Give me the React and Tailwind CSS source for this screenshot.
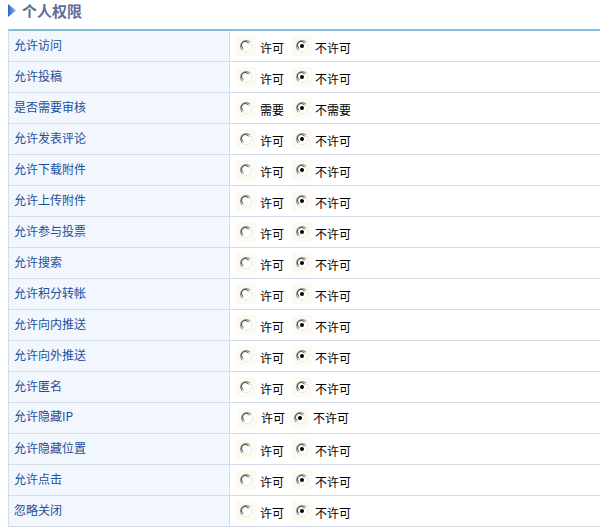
import React from "react"

const rows = [
  { label: "允许访问", yes: "许可", no: "不许可" },
  { label: "允许投稿", yes: "许可", no: "不许可" },
  { label: "是否需要审核", yes: "需要", no: "不需要" },
  { label: "允许发表评论", yes: "许可", no: "不许可" },
  { label: "允许下载附件", yes: "许可", no: "不许可" },
  { label: "允许上传附件", yes: "许可", no: "不许可" },
  { label: "允许参与投票", yes: "许可", no: "不许可" },
  { label: "允许搜索", yes: "许可", no: "不许可" },
  { label: "允许积分转帐", yes: "许可", no: "不许可" },
  { label: "允许向内推送", yes: "许可", no: "不许可" },
  { label: "允许向外推送", yes: "许可", no: "不许可" },
  { label: "允许匿名", yes: "许可", no: "不许可" },
  { label: "允许隐藏IP", yes: "许可", no: "不许可", tight: true },
  { label: "允许隐藏位置", yes: "许可", no: "不许可" },
  { label: "允许点击", yes: "许可", no: "不许可" },
  { label: "忽略关闭", yes: "许可", no: "不许可" },
]

// classic windows style radio
const Radio = ({ checked }) => (
  <span className="flex h-[20px] w-[20px] items-center justify-center bg-[#fbfbf1]">
    <svg width="12" height="12" viewBox="0 0 12 12">
      <circle cx="6" cy="6" r="5.5" fill="#ffffff" />
      <path d="M10 2.2 A5.2 5.2 0 1 0 2.2 10" fill="none" stroke="#8a8a8a" strokeWidth="1.1" />
      <path d="M8.6 3.4 A3.8 3.8 0 1 0 3.4 8.6" fill="none" stroke="#3d3d3d" strokeWidth="1" />
      <path d="M2.2 10 A5.2 5.2 0 0 0 10 2.2" fill="none" stroke="#e8e8e0" strokeWidth="1" />
      {checked && <circle cx="6" cy="6" r="2" fill="#000000" />}
    </svg>
  </span>
)

export default function App() {
  return (
    <div className="h-[528px] w-[600px] overflow-hidden bg-white text-[12px]" style={{ fontFamily: '"Noto Sans CJK SC", "Liberation Sans", sans-serif' }}>
      <div className="flex h-[29px] items-start pl-[8px] pt-[3px]">
        <svg width="8" height="13" viewBox="0 0 8 13" className="mt-[1px]">
          <defs>
            <linearGradient id="tri" x1="0" y1="0" x2="1" y2="0">
              <stop offset="0" stopColor="#2a62c8" />
              <stop offset="1" stopColor="#8fb4ee" />
            </linearGradient>
          </defs>
          <polygon points="0,0 8,6.5 0,13" fill="url(#tri)" />
        </svg>
        <span className="ml-[6px] text-[15px] font-bold leading-[16px] text-[#5d6b9b]">个人权限</span>
      </div>
      <div className="ml-[8px] w-[600px] border-t-2 border-l border-[#86bbd8] border-l-[#d6dbe8]">
        {rows.map((r) => (
          <div key={r.label} className="flex h-[31px] border-b border-[#d6dbe8]">
            <div className="flex w-[221px] items-center border-r border-[#d6dbe8] bg-[#f2f6fd] pl-[5px] text-[#1d4f9c]">
              <span className={r.tight ? "-mt-[4px]" : "-mt-[3px]"}>{r.label}</span>
            </div>
            <div className={`flex items-center text-[#000000] ${r.tight ? "pl-[7px]" : "pl-[6px]"}`}>
              <Radio checked={false} />
              <span className={r.tight ? "ml-[4px]" : "ml-[4px] mt-[3px]"}>{r.yes}</span>
              <span className={r.tight ? "ml-[5px]" : "ml-[8px]"}>
                <Radio checked />
              </span>
              <span className={r.tight ? "ml-[3px]" : "ml-[3px] mt-[3px]"}>{r.no}</span>
            </div>
          </div>
        ))}
      </div>
    </div>
  )
}
